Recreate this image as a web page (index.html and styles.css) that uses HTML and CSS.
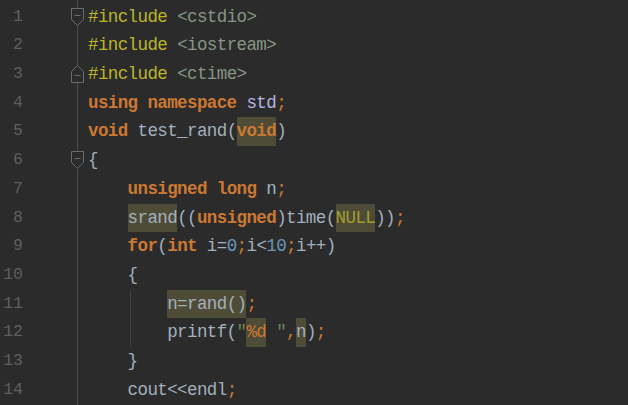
FILE: index.html
```html
<!DOCTYPE html>
<html>
<head>
<meta charset="utf-8">
<link rel="stylesheet" href="styles.css">
</head>
<body>
<div class="editor">
  <div class="row"><span class="num">1</span><span class="fold"><svg class="mk" width="13" height="18" viewBox="0 0 13 18"><path d="M0.5 0.5H12.5V11.5L6.5 17.5L0.5 11.5Z"/><path d="M3.5 7.5H9.5"/></svg></span><span class="code"><span class="pp">#include</span> <span class="hd">&lt;cstdio&gt;</span></span></div>
  <div class="row"><span class="num">2</span><span class="fold"></span><span class="code"><span class="pp">#include</span> <span class="hd">&lt;iostream&gt;</span></span></div>
  <div class="row"><span class="num">3</span><span class="fold"><svg class="mk" width="13" height="18" viewBox="0 0 13 18"><path d="M0.5 17.5H12.5V6.5L6.5 0.5L0.5 6.5Z"/><path d="M3.5 10.5H9.5"/></svg></span><span class="code"><span class="pp">#include</span> <span class="hd">&lt;ctime&gt;</span></span></div>
  <div class="row"><span class="num">4</span><span class="fold"></span><span class="code"><span class="kw">using namespace</span> <span class="ns">std</span><span class="op">;</span></span></div>
  <div class="row"><span class="num">5</span><span class="fold"></span><span class="code"><span class="kw">void</span> test_rand(<span class="kw hl">void</span>)</span></div>
  <div class="row"><span class="num">6</span><span class="fold"><svg class="mk" width="13" height="18" viewBox="0 0 13 18"><path d="M0.5 0.5H12.5V11.5L6.5 17.5L0.5 11.5Z"/><path d="M3.5 7.5H9.5"/></svg></span><span class="code">{</span></div>
  <div class="row"><span class="num">7</span><span class="fold"></span><span class="code">    <span class="kw">unsigned long</span> n<span class="op">;</span></span></div>
  <div class="row"><span class="num">8</span><span class="fold"></span><span class="code">    <span class="hl">srand</span>((<span class="kw">unsigned</span>)time(<span class="mc hl">NULL</span>))<span class="op">;</span></span></div>
  <div class="row"><span class="num">9</span><span class="fold"></span><span class="code">    <span class="kw">for</span>(<span class="kw">int</span> i=<span class="nb">0</span><span class="op">;</span>i&lt;<span class="nb">10</span><span class="op">;</span>i++)</span></div>
  <div class="row"><span class="num">10</span><span class="fold"></span><span class="code">    {</span></div>
  <div class="row"><span class="num">11</span><span class="fold"></span><span class="code guide">        <span class="hl">n=rand()</span><span class="op">;</span></span></div>
  <div class="row"><span class="num">12</span><span class="fold"></span><span class="code guide">        printf(<span class="st">"</span><span class="op hl">%d</span><span class="st"> "</span><span class="op">,</span><span class="hl">n</span>)<span class="op">;</span></span></div>
  <div class="row"><span class="num">13</span><span class="fold"></span><span class="code">    }</span></div>
  <div class="row"><span class="num">14</span><span class="fold"></span><span class="code">    cout&lt;&lt;endl<span class="op">;</span></span></div>
</div>
</body>
</html>
```

FILE: styles.css
```css
html, body {
  margin: 0;
  padding: 0;
  background: #2b2b2b;
  height: 100%;
  overflow: hidden;
}
.editor {
  padding-top: 2.5px;
  font-family: "Liberation Mono", "DejaVu Sans Mono", monospace;
  font-size: 17.5px;
  letter-spacing: -0.6px;
  color: #a3b0be;
  background: linear-gradient(#4a4c4e, #4a4c4e) no-repeat 77px 0 / 1px 100%;
  min-height: 100vh;
}
.row {
  display: flex;
  height: 28.72px;
  line-height: 28.72px;
  align-items: stretch;
}
.num {
  width: 23px;
  text-align: right;
  color: #5c5f61;
  flex: none;
  letter-spacing: 0;
  font-size: 16.5px;
}
.fold {
  width: 14px;
  margin-left: 47px;
  flex: none;
  display: flex;
  align-items: center;
  justify-content: center;
}
.mk {
  display: block;
  fill: #2b2b2b;
  stroke: #6a6d70;
  stroke-width: 1;
}
.code {
  margin-left: 4px;
  white-space: pre;
  flex: 1;
}
.guide {
  background: linear-gradient(#3d3f41, #3d3f41) no-repeat 42px 0 / 1px 100%;
}
.kw { color: #cc7832; font-weight: bold; }
.pp { color: #bbb529; }
.hd { color: #879685; }
.ns { color: #b5b6e3; }
.op { color: #cc7832; }
.nb { color: #6897bb; }
.mc { color: #a29d2c; }
.st { color: #6a8759; }
.hl {
  background: #4e4c37;
  display: inline-block;
  height: 28.72px;
  vertical-align: top;
}
```
